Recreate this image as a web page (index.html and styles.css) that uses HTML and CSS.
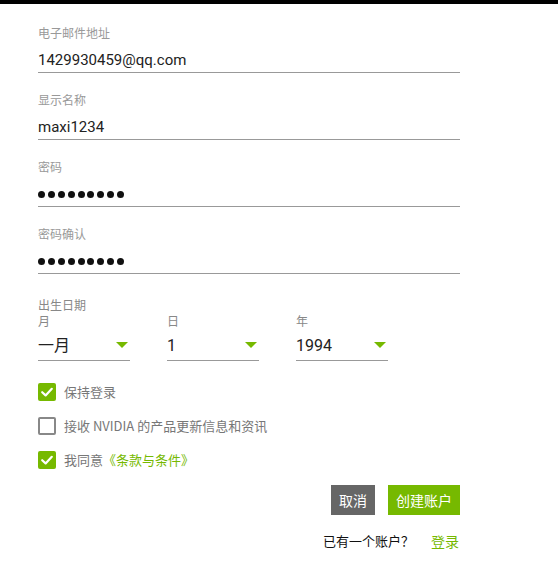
FILE: index.html
```html
<!DOCTYPE html>
<html lang="zh">
<head>
<meta charset="utf-8">
<title>创建账户</title>
<link rel="stylesheet" href="styles.css">
</head>
<body>
<div class="topbar"></div>
<form class="form">
  <div class="field">
    <div class="label">电子邮件地址</div>
    <div class="value">1429930459@qq.com</div>
  </div>
  <div class="field">
    <div class="label">显示名称</div>
    <div class="value">maxi1234</div>
  </div>
  <div class="field">
    <div class="label">密码</div>
    <div class="value dots"><i></i><i></i><i></i><i></i><i></i><i></i><i></i><i></i><i></i></div>
  </div>
  <div class="field">
    <div class="label">密码确认</div>
    <div class="value dots"><i></i><i></i><i></i><i></i><i></i><i></i><i></i><i></i><i></i></div>
  </div>

  <div class="dob">
    <div class="dob-title">出生日期</div>
    <div class="dob-cols">
      <div class="dob-col">
        <div class="dob-label">月</div>
        <div class="select"><span>一月</span><span class="arrow"></span></div>
      </div>
      <div class="dob-col">
        <div class="dob-label">日</div>
        <div class="select"><span>1</span><span class="arrow"></span></div>
      </div>
      <div class="dob-col">
        <div class="dob-label">年</div>
        <div class="select"><span>1994</span><span class="arrow"></span></div>
      </div>
    </div>
  </div>

  <div class="checks">
    <div class="check-row">
      <span class="box on"><svg viewBox="0 0 18 18" width="18" height="18"><polyline points="4.2,9.2 7.6,12.4 13.8,5.8" fill="none" stroke="#fff" stroke-width="2.2" stroke-linecap="round" stroke-linejoin="round"/></svg></span>
      <span class="check-text">保持登录</span>
    </div>
    <div class="check-row">
      <span class="box off"></span>
      <span class="check-text">接收 NVIDIA 的产品更新信息和资讯</span>
    </div>
    <div class="check-row">
      <span class="box on"><svg viewBox="0 0 18 18" width="18" height="18"><polyline points="4.2,9.2 7.6,12.4 13.8,5.8" fill="none" stroke="#fff" stroke-width="2.2" stroke-linecap="round" stroke-linejoin="round"/></svg></span>
      <span class="check-text">我同意<span class="green">《条款与条件》</span></span>
    </div>
  </div>

  <div class="buttons">
    <span class="btn cancel">取消</span>
    <span class="btn create">创建账户</span>
  </div>

  <div class="login">
    <span class="have">已有一个账户？</span>
    <span class="green login-link">登录</span>
  </div>
</form>
</body>
</html>
```
FILE: styles.css
```css
html, body {
  margin: 0;
  padding: 0;
  background: #fff;
}
body {
  font-family: "Noto Sans CJK SC", "Roboto", sans-serif;
  color: #222;
}
.topbar {
  height: 4px;
  background: #000;
}
.form {
  width: 422px;
  margin-left: 38px;
  display: flex;
  flex-direction: column;
}
.field {
  margin-top: 19px;
}
.field:first-child {
  margin-top: 21px;
}
.label {
  font-size: 12px;
  line-height: 16px;
  color: #999;
}
.value {
  margin-top: 9px;
  height: 20px;
  line-height: 20px;
  font-family: "Roboto", "Noto Sans CJK SC", sans-serif;
  font-size: 15px;
  color: #222;
  padding-bottom: 2px;
  border-bottom: 1px solid #999;
}
.dots {
  display: flex;
  align-items: center;
  gap: 2.9px;
}
.dots i {
  display: block;
  width: 7px;
  height: 7px;
  border-radius: 50%;
  background: #111;
}
.dob {
  margin-top: 23px;
}
.dob-title, .dob-label {
  font-size: 12px;
  line-height: 16px;
  color: #888;
}
.dob-cols {
  display: grid;
  grid-template-columns: 92px 92px 92px;
  column-gap: 37px;
}
.select {
  margin-top: 7px;
  height: 20px;
  line-height: 20px;
  font-family: "Roboto", "Noto Sans CJK SC", sans-serif;
  font-size: 16px;
  padding-bottom: 4px;
  border-bottom: 1px solid #999;
  display: flex;
  justify-content: space-between;
  align-items: center;
  color: #222;
}
.arrow {
  width: 0;
  height: 0;
  border-left: 6px solid transparent;
  border-right: 6px solid transparent;
  border-top: 6px solid #76b900;
  margin-right: 2px;
  margin-top: -2px;
}
.checks {
  margin-top: 22px;
  display: flex;
  flex-direction: column;
  gap: 16px;
}
.check-row {
  display: flex;
  align-items: center;
  gap: 8px;
  height: 18px;
}
.box {
  width: 18px;
  height: 18px;
  box-sizing: border-box;
  border-radius: 2px;
  flex: none;
}
.box svg {
  display: block;
}
.box.on {
  background: #76b900;
}
.box.off {
  border: 2px solid #888;
}
.check-text {
  font-size: 13px;
  line-height: 18px;
  color: #777;
}
.green {
  color: #76b900;
}
.buttons {
  margin-top: 16px;
  display: flex;
  justify-content: flex-end;
  gap: 13px;
}
.btn {
  height: 30px;
  line-height: 30px;
  padding: 0 8px;
  font-size: 14px;
  color: #fff;
}
.cancel {
  background: #666;
}
.create {
  background: #76b900;
}
.login {
  margin-top: 16px;
  display: flex;
  justify-content: flex-end;
  align-items: center;
  gap: 17px;
  font-size: 13px;
  line-height: 20px;
  padding-right: 1px;
}
.have {
  color: #111;
}
.login-link {
  font-size: 14px;
}
```
